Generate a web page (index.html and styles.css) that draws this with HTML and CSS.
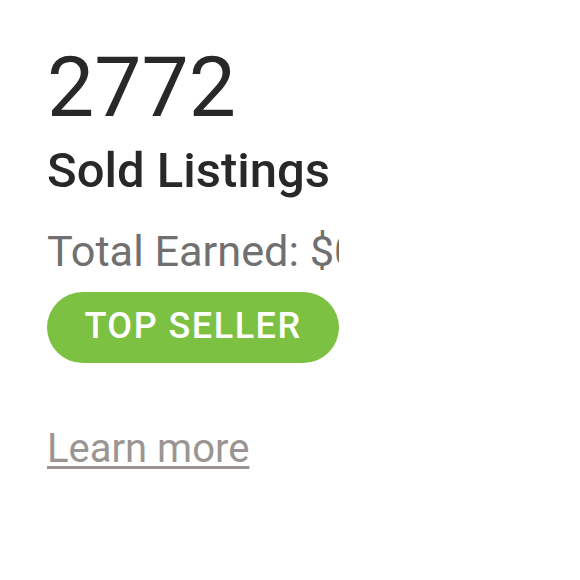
FILE: index.html
```html
<!DOCTYPE html>
<html>
<head>
<meta charset="utf-8">
<link rel="stylesheet" href="styles.css">
</head>
<body>
<div class="card">
  <div class="count">2772</div>
  <div class="label">Sold Listings</div>
  <div class="earned">Total Earned: $0</div>
  <div class="badge">TOP SELLER</div>
  <a class="more" href="#">Learn more</a>
</div>
</body>
</html>
```
FILE: styles.css
```css
html, body {
  margin: 0;
  padding: 0;
  background: #ffffff;
}
body {
  font-family: Roboto, "Noto Sans", sans-serif;
}
.card {
  width: 292px;
  margin-left: 47px;
  padding-top: 46px;
  overflow: hidden;
  display: flex;
  flex-direction: column;
  align-items: flex-start;
}
.count {
  font-size: 84px;
  line-height: 84px;
  color: #282828;
  font-weight: 400;
  white-space: nowrap;
}
.label {
  margin-top: 16px;
  font-size: 49px;
  line-height: 50px;
  font-weight: 500;
  color: #282828;
  white-space: nowrap;
}
.earned {
  margin-top: 31px;
  font-size: 43.3px;
  line-height: 50px;
  color: #707070;
  white-space: nowrap;
}
.badge {
  margin-top: 15px;
  width: 292px;
  height: 71px;
  box-sizing: border-box;
  padding-bottom: 3px;
  border-radius: 36px;
  background: #7cc142;
  color: #ffffff;
  font-size: 36px;
  font-weight: 500;
  letter-spacing: 1.5px;
  display: flex;
  align-items: center;
  justify-content: center;
}
.more {
  margin-top: 64px;
  font-size: 40px;
  line-height: 44px;
  color: #9a9593;
  text-decoration: underline;
  text-decoration-thickness: 3px;
  text-underline-offset: 4px;
  white-space: nowrap;
}
```
